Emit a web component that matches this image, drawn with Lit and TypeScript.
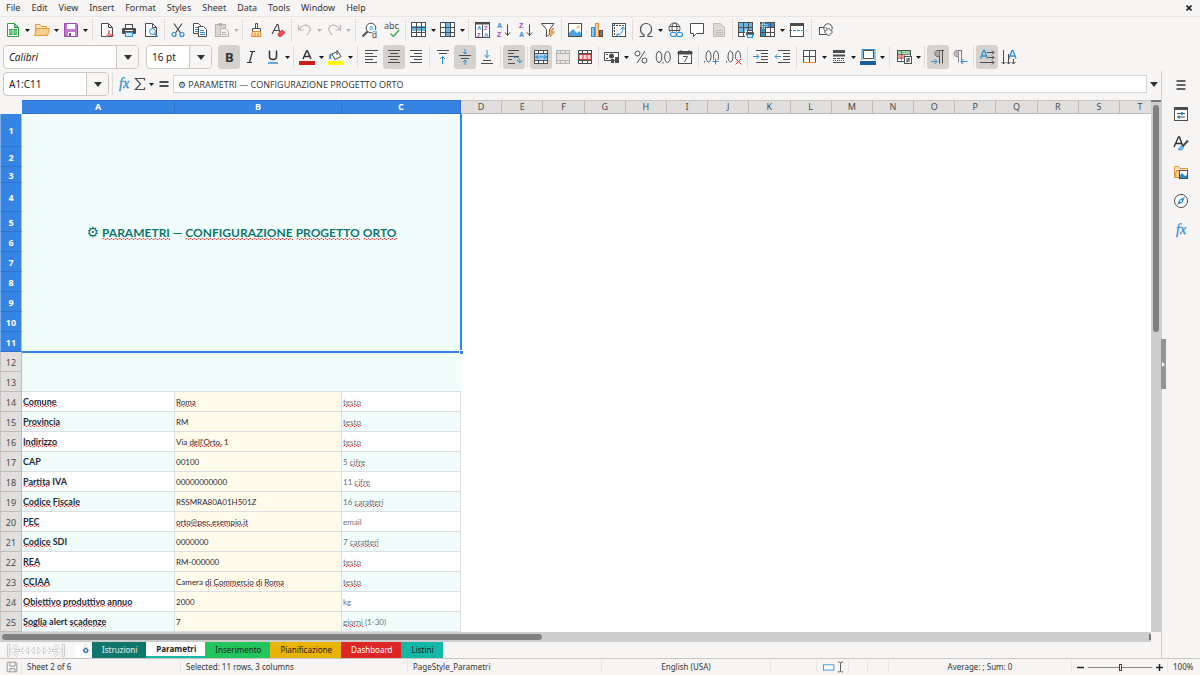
import { LitElement, html, svg, css, nothing } from "lit";
import { customElement, property, state } from "lit/decorators.js";
import { classMap } from "lit/directives/class-map.js";

const G = "#4d4d4f";
const B = "#2f8fd0";

/* Lines of an alignment glyph: each entry is [x1, x2, y]. */
const lines = (list: number[][]) =>
  list.map(([a, b, y]) => svg`<path d="M${a} ${y}H${b}" stroke=${G}/>`);

const cells = (fill: string, band: string) => svg`
  <rect x=".5" y=".5" width="14" height="14" fill="#fff" stroke=${G}/>
  <path d=${band} fill=${fill} stroke="none"/>
  <path d="M.5 5.5h14M.5 10.5h14M5.5 .5v14M10.5 .5v14" stroke=${G}/>`;

const icons: Record<string, unknown> = {
  new: svg`<path d="M2.5 1.5h7l4 4v9h-11z" fill="#fff" stroke="#2f9e47"/><path d="M9.5 1.5v4h4z" fill="#7fd091" stroke="#2f9e47"/><rect x="4" y="7" width="8" height="6" fill="#37a84e"/><path d="M4 9h8M4 11h8M8 7v6" stroke="#d9f3de" stroke-width=".7"/>`,
  open: svg`<path d="M1.5 13.500V2.500h4.500l1.500 2h5v2" fill="#fbe3bd" stroke="#e19a3c"/><path d="M.5 13.500l2-7h13l-2 7z" fill="#f9cf8d" stroke="#e19a3c"/>`,
  save: svg`<path d="M1.500 1.500h12l1 1v12h-13z" fill="#c47ad0" stroke="#9a48ad"/><rect x="4" y="2" width="8" height="5" fill="#fff"/><rect x="5" y="10" width="7" height="4" fill="#fff"/><rect x="6" y="11" width="2" height="3" fill="#9a48ad"/>`,
  pdf: svg`<path d="M2.500 1.500h7l4 4v9h-11z" fill="#fff" stroke=${G}/><path d="M9.500 1.500v4h4" stroke=${G}/><path d="M6 15c2.500-1 4.500-4 4-6.500-1 2.500 2 5 5 5-3-.8-6 0-9 1.500z" fill="#fbdcdc" stroke="#e2535a"/>`,
  print: svg`<rect x="4.500" y="2.500" width="7" height="4" fill="#fff" stroke=${G}/><rect x="1" y="6" width="14" height="6" rx="1" fill=${G}/><path d="M4 8.500h8" stroke="#fff"/><rect x="4.500" y="10.500" width="7" height="4" fill="#d8ecfb" stroke=${B}/>`,
  preview: svg`<path d="M2.500 1.500h7l4 4v9h-11z" fill="#fff" stroke=${G}/><path d="M9.500 1.500v4h4" stroke=${G}/><circle cx="9.500" cy="9.500" r="3" fill="#e4f3fd" stroke=${B}/><path d="M11.700 11.700l3 3" stroke=${B} stroke-width="1.500"/>`,
  cut: svg`<path d="M4 1.500l6.500 9.500M12 1.500L5.500 11" stroke=${G} stroke-width="1.200"/><circle cx="4" cy="12.500" r="2" stroke=${B} stroke-width="1.200"/><circle cx="12" cy="12.500" r="2" stroke=${B} stroke-width="1.200"/>`,
  copy: svg`<path d="M1.500 1.500h5l3 3v7h-8z" fill="#fff" stroke=${G}/><path d="M3 5.500h3M3 7.500h3M3 9.500h3" stroke=${B}/><path d="M6.500 4.500h5l3 3v7h-8z" fill="#fff" stroke=${G}/><path d="M8 8.500h4M8 10.500h5M8 12.500h5" stroke=${B}/>`,
  paste: svg`<rect x="1.500" y="2.500" width="10" height="12" fill="#d8d7d6" stroke="#b4b3b2"/><rect x="4.500" y="1" width="4" height="3" fill="#b4b3b2"/><path d="M6.500 6.500h5l3 3v5h-8z" fill="#f3f2f1" stroke="#b4b3b2"/><path d="M8 10.500h4M8 12.500h5" stroke="#b4b3b2"/>`,
  brush: svg`<path d="M7.500 1.500h2v5h-2z" fill="#fff" stroke=${G}/><path d="M4.500 6.500h8v3h-8z" fill="#fff" stroke=${G}/><path d="M4.500 9.500h8l.5 5H3.500z" fill="#fbd7a4" stroke="#e08a2e"/><path d="M7 11v3M10 11v3" stroke="#e08a2e"/>`,
  clear: svg`<path d="M2 12L7 2.500h1l2 9.500M4 8.500h5" stroke=${G} stroke-width="1.200"/><path d="M8 12l4-4 3 2.500-4 4H9z" fill="#ee4b52" stroke="#d9363e"/>`,
  undo: svg`<path d="M1.500 3v5h5M2 7.500C5 3 9 2.500 11.500 4c3 2 2 5-1.500 9" stroke="#b9b8b7" stroke-width="1.200"/>`,
  redo: svg`<path d="M14.500 3v5h-5M14 7.500C11 3 7 2.500 4.500 4c-3 2-2 5 1.500 9" stroke="#b9b8b7" stroke-width="1.200"/>`,
  find: svg`<circle cx="9" cy="6" r="4.800" stroke=${G} fill="#fff"/><path d="M5.500 9.500l-5 5" stroke=${G} stroke-width="2"/><g font-family="Liberation Sans, sans-serif"><text x="7" y="8" font-size="7" fill=${B}>a</text><text x="10" y="16" font-size="9" fill=${G} stroke="#f6f5f4" stroke-width="2" paint-order="stroke">d</text></g>`,
  spell: svg`<text x="0" y="7" font-size="9" fill=${G}>abc</text><path d="M6.500 11.500l3 3 5.500-6.500" stroke="#37a84e" stroke-width="1.400"/>`,
  row: cells("#67b7ea", "M1 4h13v5H1z"),
  col: cells("#67b7ea", "M5 1h5v13H5z"),
  sort: svg`<rect x="1.500" y=".5" width="14" height="15" fill="#fff" stroke=${G}/><path d="M1 .5h15v2H1z" fill=${G}/><path d="M8.500 3v12" stroke=${G}/><g font-size="6" font-weight="700" font-family="Liberation Sans, sans-serif"><text x="3" y="8" fill=${B}>A</text><text x="3" y="15" fill="#a347ba">Z</text><text x="10" y="8" fill="#a347ba">Z</text><text x="10" y="15" fill=${B}>A</text></g>`,
  az: svg`<g font-size="7" font-weight="700" font-family="Liberation Sans, sans-serif"><text x="1" y="6" fill=${B}>A</text><text x="1" y="15" fill="#a347ba">Z</text></g><path d="M11.500 2.500v11M9 10.500l2.500 3 2.500-3" stroke=${G}/>`,
  za: svg`<g font-size="7" font-weight="700" font-family="Liberation Sans, sans-serif"><text x="1" y="6" fill="#a347ba">Z</text><text x="1" y="15" fill=${B}>A</text></g><path d="M11.500 2.500v11M9 10.500l2.500 3 2.500-3" stroke=${G}/>`,
  filter: svg`<path d="M1.500 1.500h12.500l-4.500 6v5l-3 2v-7z" fill="#fff" stroke=${G}/><path d="M12 6.500l-3 4.500h2.500L10 15l4.500-5H12l1.500-3.500z" fill="#f7b35c" stroke="#e08a2e" stroke-width=".8"/>`,
  image: svg`<rect x="1.500" y="1.500" width="13" height="13" fill="#fff" stroke=${G}/><path d="M2 14v-3l4-4 4 4 2-2 2 2v3z" fill="#4ba3dd"/><circle cx="11" cy="5" r="1.500" fill="#f7b35c"/>`,
  chart: svg`<rect x="2.500" y="5.500" width="3" height="9" fill="#8cc8ef" stroke=${B}/><rect x="6.500" y="1.500" width="3" height="13" fill="#fbcf96" stroke="#e08a2e"/><rect x="10.500" y="8.500" width="3" height="6" fill="#777" stroke=${G}/>`,
  pivot: svg`<rect x="1.500" y="1.500" width="13" height="13" fill="#fff" stroke=${G}/><path d="M2 3.500h12M3.500 2v12" stroke=${G} stroke-dasharray="2 1"/><path d="M5.500 13C10 13 12 10 12 5.500M9.500 7.500L12 5l2 2.500M7.500 11l-2 2 2 1.500" stroke=${B}/>`,
  omega: svg`<path d="M1.500 14.500H6v-1.800C3.500 11.500 2.500 9.500 2.500 7.200 2.500 4 4.800 1.500 8 1.500s5.500 2.500 5.500 5.700c0 2.300-1 4.300-3.500 5.500v1.800h4.500" stroke=${G} stroke-width="1.200"/>`,
  link: svg`<circle cx="7.500" cy="6.500" r="5.500" fill="#fff" stroke=${G}/><ellipse cx="7.500" cy="6.500" rx="2.500" ry="5.500" stroke=${G}/><path d="M2.500 4.500h10M2 8.500h11" stroke=${G}/><rect x="3" y="9.500" width="13" height="6" fill="#f6f5f4"/><rect x="3.500" y="10.500" width="6" height="4" rx="2" stroke=${B} stroke-width="1.200"/><rect x="9.500" y="10.500" width="6" height="4" rx="2" stroke=${B} stroke-width="1.200"/>`,
  comment: svg`<path d="M1.500 1.500h13v10H7.500l-3 3v-3h-3z" fill="#fff" stroke=${G}/>`,
  note: svg`<path d="M2.500 1.500h7l4 4v9h-11z" fill="#dcdbda" stroke="#bdbcbb"/><path d="M4.500 8.500h7M4.500 10.500h7M4.500 12.500h7" stroke="#bdbcbb"/>`,
  area: svg`${cells("#67b7ea", "M1 1h13v9H1z")}<rect x="7" y="8" width="9" height="8" fill="#f6f5f4"/><rect x="8" y="10" width="8" height="3.500" rx="1" fill=${G}/><rect x="9.500" y="8.500" width="5" height="2" fill="#fff" stroke=${G}/><rect x="9.500" y="12.500" width="5" height="3" fill="#d8ecfb" stroke=${B}/>`,
  freeze: svg`${cells("#2f8fd0", "M1 1h4v13H1zM5 1h9v4H5z")}<path d="M3.500 0v7M.5 3.500h7" stroke="#fff" stroke-width="2"/><path d="M3.500 0v7M.5 3.500h7" stroke=${B}/>`,
  split: svg`<rect x="1.500" y="1.500" width="13" height="13" fill="#fff" stroke=${G}/><path d="M1 1h14v3H1z" fill=${G}/><path d="M0 8.500h16" stroke=${B} stroke-dasharray="3 1"/>`,
  shapes: svg`<rect x="1.500" y="5.500" width="7" height="7" fill="#fff" stroke=${G}/><circle cx="10" cy="6" r="4.200" fill="#fff" fill-opacity=".5" stroke=${G}/><path d="M10.500 6l4 4-4 4-4-4z" fill="#fff" stroke=${G}/>`,
  bold: svg`<text x="4" y="13" font-size="13" font-weight="700" fill="#333">B</text>`,
  italic: svg`<path d="M7 2.500h5M4 13.500h5M9.500 2.500l-3 11" stroke="#333" stroke-width="1.200"/>`,
  under: svg`<path d="M4.500 1.500v6c0 4 7 4 7 0v-6" stroke="#333" stroke-width="1.500"/><path d="M3 14h10" stroke=${B} stroke-width="1.500"/>`,
  color: svg`<path d="M4 10L7.500 2h1L12 10M5.500 7.500h5" stroke="#333" stroke-width="1.500"/><path d="M0 14h16" stroke="#c9211e" stroke-width="4"/>`,
  high: svg`<path d="M4 5l6-2.500 3 5-6 3z" fill="#fff" stroke=${G}/><path d="M9 1v5" stroke=${G}/><path d="M4 5c-2 .5-2.500 2.500-1.500 5" stroke=${B} stroke-width="1.800"/><path d="M0 14h16" stroke="#ffff00" stroke-width="4"/>`,
  left: svg`${lines([[1, 14, 1.5], [1, 9, 4.5], [1, 13, 7.5], [1, 9, 10.5], [1, 13, 13.5]])}`,
  center: svg`${lines([[2, 14, 1.5], [4, 12, 4.5], [2, 14, 7.5], [4, 12, 10.5], [2, 14, 13.5]])}`,
  right: svg`${lines([[2, 14, 1.5], [6, 14, 4.5], [2, 14, 7.5], [6, 14, 10.5], [2, 14, 13.5]])}`,
  top: svg`${lines([[2, 14, 1.5], [4, 12, 4.5]])}<path d="M7.500 15V7.500M5 10l2.500-2.500L10 10" stroke=${B}/>`,
  mid: svg`${lines([[2, 14, 6.5], [4, 12, 9.5]])}<path d="M8 0v4.500M6 3l2 2 2-2M8 16v-4.500M6 13l2-2 2 2" stroke=${B}/>`,
  bottom: svg`${lines([[2, 14, 14.5], [4, 12, 11.5]])}<path d="M8 1v7.500M5.500 6L8 8.500 10.500 6" stroke=${B}/>`,
  wrap: svg`${lines([[2, 13, 1.5], [2, 8, 4.5], [2, 13, 7.5], [2, 6, 10.5], [2, 9, 14.5]])}<path d="M8 8.500c4-1 6 1 6 5M11 11l3 3 2-3" stroke=${B}/>`,
  merge: svg`<rect x="1.500" y="1.500" width="13" height="13" fill="#fff" stroke=${G}/><path d="M1.500 4.500h13M1.500 11.500h13M5.500 1.500v3M10.500 1.500v3M5.500 11.500v3M10.500 11.500v3" stroke=${G}/><rect x="2" y="5" width="12" height="6" fill="#9fd2f4"/><path d="M2 8h12M5 6L3 8l2 2M11 6l2 2-2 2" stroke=${B}/>`,
  mergeOff: svg`<rect x="1.500" y="1.500" width="13" height="13" fill="#e6e5e4" stroke="#b4b3b2"/><path d="M1.500 4.500h13M1.500 11.500h13M5.500 1.500v3M10.500 1.500v3M5.500 11.500v3M10.500 11.500v3" stroke="#b4b3b2"/>`,
  unmerge: svg`<rect x="1.500" y="1.500" width="13" height="13" fill="#fff" stroke=${G}/><path d="M1.500 4.500h13M5.500 1.500v3M10.500 1.500v3M1.500 11.500h13M5.500 11.500v3M10.500 11.500v3" stroke=${G}/><path d="M2 5.500h12v5H2zM6 5.500v5M10 5.500v5" fill="#fbdcdc" stroke="#d9363e"/>`,
  money: svg`<rect x=".5" y="3.500" width="14" height="8" fill="#fff" stroke=${G}/><circle cx="7.500" cy="7" r="2.500" fill=${G}/><path d="M2 5.500h2M2 9.500h2" stroke=${G}/><rect x="7" y="10" width="3" height="4" fill=${G}/><rect x="11" y="8" width="4" height="6" fill=${G}/>`,
  percent: svg`<circle cx="4.500" cy="4.500" r="2.500" stroke=${G}/><circle cx="11.500" cy="11.500" r="2.500" stroke=${G}/><path d="M12 2L4 14" stroke=${G}/>`,
  number: svg`<ellipse cx="4" cy="8" rx="2.800" ry="5.500" stroke=${G}/><ellipse cx="12.500" cy="8" rx="2.800" ry="5.500" stroke=${G}/><path d="M8 13v1.500" stroke=${G}/>`,
  date: svg`<rect x="1.500" y="2.500" width="13" height="12" fill="#fff" stroke=${G}/><path d="M1 3h14v2H1zM4 1v2M12 1v2" fill=${G} stroke=${G}/><path d="M6 7.500h4.500L7.500 13" stroke=${G}/>`,
  decAdd: svg`<path d="M.5 12v1.500" stroke=${G}/><ellipse cx="4.500" cy="7.500" rx="2.500" ry="5.500" stroke=${G}/><ellipse cx="12" cy="7.500" rx="2.500" ry="5.500" stroke=${G}/><path d="M11.500 9.500v6M8.500 12.500h6" stroke="#f6f5f4" stroke-width="3"/><path d="M11.500 9.500v6M8.500 12.500h6" stroke=${B}/>`,
  decDel: svg`<path d="M.5 12v1.500" stroke=${G}/><ellipse cx="4.500" cy="7.500" rx="2.500" ry="5.500" stroke=${G}/><ellipse cx="12" cy="7.500" rx="2.500" ry="5.500" stroke=${G}/><path d="M9.500 9.500l6 6M15.500 9.500l-6 6" stroke="#f6f5f4" stroke-width="3"/><path d="M9.500 9.500l6 6M15.500 9.500l-6 6" stroke="#e2383f"/>`,
  indent: svg`${lines([[3, 15, 1.5], [8, 15, 4.5], [8, 15, 7.5], [8, 15, 10.5], [3, 15, 13.5]])}<path d="M0 7.500h6M3.500 5L6 7.500 3.500 10" stroke=${B}/>`,
  outdent: svg`${lines([[3, 15, 1.5], [8, 15, 4.5], [8, 15, 7.5], [8, 15, 10.5], [3, 15, 13.5]])}<path d="M0 7.500h6M2.500 5L0 7.500 2.500 10" stroke=${B}/>`,
  border: svg`<rect x="1.500" y="1.500" width="12" height="12" fill="#fff" stroke=${G}/><path d="M7.500 1.500v12M1.500 7.500h12" stroke=${G}/><path d="M1 13.500h13" stroke="#e08a2e"/>`,
  line: svg`<path d="M2 2.500h12" stroke=${G} stroke-width="3"/><path d="M2 6.500h12" stroke=${G} stroke-width="2"/><path d="M2 9.500h12" stroke=${G} stroke-dasharray="3 1"/><path d="M2 13.500h12" stroke=${G}/><path d="M2 11.500h12" stroke=${G} stroke-dasharray="1 1"/>`,
  lcolor: svg`<path d="M3.500 1.500h10v8h-10z" fill="#fff" stroke=${G}/><path d="M2 11V.5h13V11" stroke=${B}/><path d="M0 14h16" stroke="#1f5c9e" stroke-width="4"/>`,
  cond: svg`<rect x="1.500" y="1.500" width="13" height="11" fill="#fff" stroke=${G}/><rect x="2" y="2" width="12" height="3" fill="#8fd49d"/><rect x="2" y="5" width="7" height="4" fill="#f29a9a"/><path d="M5.500 2v10M1.500 5.500h13M1.500 9.500h8" stroke=${G} stroke-width=".6"/><rect x="8.500" y="7.500" width="7" height="7" fill="#fff" stroke=${G}/><path d="M10 10h4M10 12h4M13 9l-2 4.500" stroke=${G}/>`,
  ltr: svg`<path d="M14 1.500H8c-4 0-4 6 0 6h1M9.500 1.500v13M12.500 1.500v13" stroke=${G}/><path d="M5.500 4.500c0-2 2-3 4-3v6c-2 0-4-1-4-3z" fill="#a9a7a5"/><path d="M1 12.500h6M4.500 10L7 12.500 4.500 15" stroke=${B}/>`,
  rtl: svg`<path d="M10 1.500H5c-4 0-4 6 0 6h1M6.500 1.500v12M9.500 1.500v13" stroke=${G} stroke-opacity=".7"/><path d="M2.500 4.500c0-2 2-3 4-3v6c-2 0-4-1-4-3z" fill="#b9b7b5"/><path d="M9 12.500h6.500M11.500 10L9 12.500 11.500 15" stroke=${B}/>`,
  horiz: svg`<path d="M1.500 9.500L4.500 1.500h1l3 8M2.500 7h5" stroke=${B} stroke-width="1.300"/><path d="M8 3.500h7M13 1.500l2 2-2 2M9 8.500h6M13 6.500l2 2-2 2M1 13.500h14M13 11.500l2 2-2 2" stroke=${G}/>`,
  vert: svg`<path d="M8 9.500L11 1.500h1l3 8M9 7h5" stroke=${B} stroke-width="1.300"/><path d="M2.500 1v14M.5 13l2 2 2-2M7.500 5v10M5.500 13l2 2 2-2M12.500 10v5M10.500 13l2 2 2-2" stroke=${G}/>`,
  fx: svg`<text x="3" y="12" font-size="14" font-style="italic" font-family="Liberation Serif, serif" fill=${B} stroke=${B} stroke-width=".3">fx</text>`,
  sum: svg`<path d="M12.500 4.500v-2h-9L8.500 8l-5 5.500h9v-2" stroke=${G} stroke-width="1.200"/>`,
  equal: svg`<path d="M3.500 6h9M3.500 10h9" stroke=${G} stroke-width="2"/>`,
  menu: svg`<path d="M3.500 4h9M3.500 8h9M3.500 12h9" stroke="#333" stroke-width="1.400"/>`,
  props: svg`<rect x="1.500" y="1.500" width="13" height="13" fill="#fff" stroke=${G}/><path d="M1 1h14v3H1z" fill=${G}/><path d="M4 7.500h8M4 11h8" stroke=${G}/><path d="M9 6v3M6 9.500v3" stroke=${B} stroke-width="2"/>`,
  styles: svg`<path d="M1 12L5.500 2h1L10 12M3 8.500h6" stroke="#333" stroke-width="1.400"/><path d="M15 5.500l-5.500 6" stroke=${G} stroke-width="2"/><path d="M5 14.500c2-.5 1.500-3 3.500-3.500 2 0 2.500 3-.5 4z" fill="#8cc8ef" stroke=${B}/>`,
  gallery: svg`<path d="M1.500 13.500v-11h4l1.500 2h7.500v2" fill="#fbe3bd" stroke="#e19a3c"/><path d="M1.500 13.500l2-7h3v7z" fill="#f9cf8d" stroke="#e08a2e"/><rect x="6.500" y="6.500" width="8" height="8" fill="#fff" stroke=${G}/><path d="M7 14v-3l2-2 3 3 2-1v3z" fill=${B}/>`,
  nav: svg`<circle cx="8" cy="8" r="6.500" fill="#fff" stroke=${G}/><path d="M12 4l-2.500 5.500L4 12l2.500-5.500z" fill=${B}/><circle cx="8" cy="8" r="1" fill="#fff"/>`,
  disk: svg`<path d="M2.500 2.500h10l1 1v10h-11z" stroke="#8b8a89"/><path d="M5.500 3v4h6V3M5.500 13v-3h6v3" stroke="#8b8a89"/>`,
  selmode: svg`<rect x=".5" y="5.500" width="12" height="6" fill="#fff" stroke=${B}/>`,
  ibeam: svg`<path d="M5 2.500h2l1 .5 1-.5h2M5 13.500h2l1-.5 1 .5h2M8 3v10" stroke=${G}/>`,
  first: svg`<g stroke="#c9c8c7" fill="#fff"><path d="M1.500 1.500h2v13h-2zM11 1.500l1.500 1.500-4 4h6v2h-6l4 4-1.500 1.500L4.500 8z"/></g>`,
  prev: svg`<g stroke="#c9c8c7" fill="#fff"><path d="M2.500 4.500L.5 8l2 3.500M8 4.500L5 8l3 3.500zM14 4.500L11 8l3 3.500z"/></g>`,
  next: svg`<g stroke="#c9c8c7" fill="#fff"><path d="M13.500 4.500l2 3.500-2 3.500M8 4.500L11 8l-3 3.500zM2 4.500L5 8l-3 3.500z"/></g>`,
  last: svg`<g stroke="#c9c8c7" fill="#fff"><path d="M12.500 1.500h2v13h-2zM5 1.500L3.500 3l4 4h-6v2h6l-4 4L5 14.500 11.500 8z"/></g>`,
  add: svg`<path d="M0 1h10l4 4v11H0z" fill="#fff"/><path d="M10 1v4h4" stroke="#dddbd9"/><circle cx="11.500" cy="8" r="2" stroke="#3465a4" stroke-width="1.400"/><path d="M11.500 5v1.500M11.500 9.500V11M8.500 8H10M13 8h1.500" stroke="#3465a4"/>`,
};

@customElement("tool-button")
class ToolButton extends LitElement {
  @property() icon = "";
  @property() label = "";
  @property({ type: Boolean }) menu = false;
  @property({ type: Boolean }) narrow = false;
  @property({ type: Boolean }) pressed = false;
  @property({ type: Boolean }) muted = false;

  static styles = css`
    :host { display: flex; align-items: center; flex: none; }
    button { border: 0; background: none; padding: 0; margin: 0; display: grid; place-items: center; }
    .main { width: 22px; height: 24px; border-radius: 3px; }
    .main.narrow { width: 16px; }
    .main.on { background: #d5d1cd; }
    .drop { width: 7px; height: 24px; color: #1c1c1c; overflow: visible; }
    .drop.off { color: #b4b3b2; }
    svg { width: 16px; height: 16px; fill: none; overflow: visible; font-family: "Noto Sans", sans-serif; }
    .caret { width: 5px; height: 3px; fill: currentColor; }
  `;

  render() {
    return html`
      <button class=${classMap({ main: true, on: this.pressed, narrow: this.narrow })} aria-label=${this.label}
        ?disabled=${this.muted}>
        <svg viewBox="0 0 16 16">${icons[this.icon]}</svg>
      </button>
      ${this.menu
        ? html`<button class=${classMap({ drop: true, off: this.muted })} aria-label="${this.label} options">
            <svg class="caret" viewBox="0 0 5 3"><path d="M0 0h5L2.500 3z" /></svg>
          </button>`
        : nothing}
    `;
  }
}

/* Toolbar entries: "|" is a narrow divider, "||" a wide one.
   Suffixes: "v" has a menu, "+" is pressed, "-" is unavailable. */
const standardBar = "new:v open:v save:v || pdf print preview | cut copy paste:v- | brush clear | undo:v- redo:v- || find spell | row:v col:v | sort az za filter | image chart pivot | omega:v link comment note:- | area freeze:v split || shapes";
const formatBar = "bold:+ italic under:v | color:v high:v || left center:+ right | top mid:+ bottom | wrap:+ | merge:+ mergeOff:- unmerge | money:v percent number date | decAdd decDel | indent outdent | border:v line:v lcolor:v || cond:v | ltr:+ rtl | horiz:+ vert";

const menus = ["File", "Edit", "View", "Insert", "Format", "Styles", "Sheet", "Data", "Tools", "Window", "Help"];
const tabs = [
  ["Istruzioni", "teal"], ["Parametri", "current"], ["Inserimento", "green"],
  ["Pianificazione", "amber"], ["Dashboard", "red"], ["Listini", "aqua"],
];
const title = "PARAMETRI — CONFIGURAZIONE PROGETTO ORTO";
const titleParts = "~PARAMETRI — ~CONFIGURAZIONE ~PROGETTO ~ORTO";

/* Words that start with "~" are unknown to the spelling checker. */
const rows: string[][] = [
  ["~Comune", "~Roma", "~testo"],
  ["~Provincia", "RM", "~testo"],
  ["~Indirizzo", "Via ~dell'Orto, 1", "~testo"],
  ["CAP", "00100", "5 ~cifre"],
  ["~Partita IVA", "00000000000", "11 ~cifre"],
  ["~Codice ~Fiscale", "RSSMRA80A01H501Z", "16 ~caratteri"],
  ["~PEC", "~orto@pec.esempio.it", "email"],
  ["~Codice SDI", "0000000", "7 ~caratteri"],
  ["~REA", "RM-000000", "~testo"],
  ["~CCIAA", "Camera ~di ~Commercio ~di ~Roma", "~testo"],
  ["~Obiettivo ~produttivo ~annuo", "2000", "kg"],
  ["~Soglia alert ~scadenze", "7", "~giorni (1-30)"],
];

const checked = (text: string) =>
  text.split(" ").map((w, i) => html`${i ? " " : ""}${w[0] === "~" ? html`<span class="typo">${w.slice(1)}</span>` : w}`);

@customElement("app-root")
class AppRoot extends LitElement {
  @state() sheet = "Parametri";

  static styles = css`
    * { box-sizing: border-box; }
    :host {
      display: flex; flex-direction: column; height: 100vh; overflow: hidden;
      background: #f6f5f4; color: #333; font: 9px/12px "Noto Sans", sans-serif;
    }
    button, input, select { font: inherit; color: inherit; border: 0; padding: 0; margin: 0; background: none; outline: 0; border-radius: 0; }
    .menubar { display: flex; align-items: center; height: 17px; padding: 0 6px; gap: 11px; border-bottom: 1px solid #e8e6e4; }
    .close { margin-left: auto; width: 10px; height: 10px; display: grid; place-items: center; }
    .close svg { width: 6px; height: 6px; }
    .bar { display: flex; align-items: center; height: 27px; padding: 0 0 1px 2px; }
    .bar.format { padding-left: 3px; }
    .sep { width: 5px; height: 22px; flex: none; display: grid; justify-content: center; }
    .sep.wide { width: 7px; }
    .sep::after { content: ""; width: 1px; background: #dfdcd9; }
    .combo { position: relative; display: flex; height: 24px; border: 1px solid #cdc7c2; border-radius: 4px; background: #fff; overflow: hidden; flex: none; }
    .combo select, .combo input { appearance: none; flex: 1; min-width: 0; padding-left: 5px; font-size: 10px; color: #1c1c1c; }
    .combo .arrow { width: 22px; display: grid; place-items: center; border-left: 1px solid #cdc7c2; background: #f6f5f4; flex: none; pointer-events: none; }
    .arrow svg, .expand svg { width: 8px; height: 5px; fill: #2e3436; }
    .font { width: 136px; margin-right: 7px; }
    .font select { font-style: italic; }
    .size { width: 66px; margin-right: 6px; }
    .name { width: 106px; }
    .main { flex: 1; min-height: 0; display: flex; }
    .work { flex: 1; min-width: 0; display: flex; flex-direction: column; border-right: 1px solid #cfccc9; }
    .formula { display: flex; align-items: center; height: 29px; padding: 0 1px 3px 3px; flex: none; }
    .formula .sep { width: 7px; }
    .formula .equals { margin: 0 1px; }
    .formula .text { flex: 1; min-width: 0; height: 18px; border: 1px solid #d5d2cf; background: #fff; padding-left: 4px; font-family: "Open Sans", sans-serif; }
    .expand { width: 13px; height: 18px; display: grid; place-items: center; }
    .view { flex: 1; min-height: 0; display: flex; }
    .grid { flex: 1; min-width: 0; overflow: hidden; background: #fff; }
    table { table-layout: fixed; width: 100%; border-collapse: separate; border-spacing: 0; }
    th, td { padding: 0; overflow: hidden; white-space: nowrap; }
    .c-head { width: 22px; } .c-a { width: 153px; } .c-b { width: 167px; } .c-c { width: 119px; } .c-last { width: 31px; }
    th { background: #e0dfde; font-weight: 400; color: #4a4a4a; border: solid #bdbbb9; border-width: 0 1px 1px 0; line-height: 12px; text-align: center; }
    thead th { height: 14px; border-top: 1px solid #c6c4c2; }
    thead th:last-child { border-right: 0; padding-left: 9px; }
    thead th.corner { background: #f6f5f4; border-color: #f6f5f4; }
    th.on { background: #3584e4; color: #fff; font-weight: 700; border-color: #2f74c8; }
    tbody th { border-left: 1px solid #c6c4c2; padding-top: 2px; }
    tbody th.on { border-right-color: #a9c4e6; border-left-color: #7fb0ec; }
    .r33 { height: 33px; } .r29 { height: 29px; } .r20 { height: 20px; } .r16 { height: 16px; }
    .banner { position: relative; overflow: visible; background: #f0fdfa; color: #0f766e; text-align: center; font: 700 12px/14px Lato, sans-serif; padding-bottom: 2px; }
    .gear { font: 400 14px/14px "DejaVu Sans", sans-serif; }
    .frame { position: absolute; inset: 0 -1px -1px 0; border: solid #3584e4; border-width: 0 2px 2px 0; pointer-events: none; }
    .frame::after { content: ""; position: absolute; right: -3px; bottom: -3px; width: 3px; height: 3px; background: #3584e4; border: solid #fff; border-width: 1px 0 0 1px; box-sizing: content-box; }
    .mint { background: #f0fdfa; }
    .data td { font: 8px/12px Lato, sans-serif; padding-left: 1px; border: solid #dcdfe2; border-width: 0 1px 1px 0; color: #1f2937; }
    .data.even td { background: #f0fdfa; }
    .data td.key { font-weight: 700; font-size: 9px; }
    .data td.value { background: #fffbeb; }
    .data td.hint { color: #6b7280; }
    .last-blank td.mint { border-bottom: 1px solid #dcdfe2; }
    .typo {
      background: url("data:image/svg+xml,%3Csvg xmlns='http://www.w3.org/2000/svg' width='4' height='2'%3E%3Cpath d='M0 1.500L1 .5H2L3 1.500H4' fill='none' stroke='%23e23b3b' stroke-width='1'/%3E%3C/svg%3E") repeat-x left bottom;
    }
    .vscroll { width: 10px; background: #cdcdcd; padding: 3px 2px 0; border-top: 2px solid #777; flex: none; }
    .vthumb { height: 43%; background: #808080; border-radius: 3px; }
    .hscroll { height: 10px; background: #cdcdcd; padding: 2px 0 2px 2px; margin-right: 10px; flex: none; display: flex; justify-content: space-between; }
    .hthumb { width: 47%; background: #808080; border-radius: 3px; }
    .hend { width: 2px; background: #777; }
    .tabs { display: flex; align-items: stretch; height: 17px; border-bottom: 1px solid #c9c6c3; flex: none; font-size: 8px; }
    .navs { display: flex; align-items: center; padding: 0 7px 0 6px; }
    .navs button { width: 15px; height: 16px; display: grid; place-items: center; }
    .navs svg, .add svg { width: 15px; height: 15px; fill: none; }
    .add { width: 18px; margin-right: 1px; display: grid; place-items: center; }
    .tab { padding: 0 9px 0 10px; height: 16px; color: #1c1c1c; }
    .tab.teal { background: #0f766e; color: #e6f4f2; }
    .tab.current { background: #fff; font-weight: 700; border-bottom: 2px solid #14b8a6; }
    .tab.green { background: #22c55e; }
    .tab.amber { background: #eab308; }
    .tab.red { background: #dc2626; color: #fff; }
    .tab.aqua { background: #14b8a6; }
    .sidebar { position: relative; width: 38px; flex: none; display: flex; flex-direction: column; align-items: center; padding-top: 2px; border-bottom: 1px solid #c9c6c3; gap: 5px; }
    .grip { position: absolute; left: -1px; top: 268px; width: 5px; height: 50px; background: #949494; display: grid; place-items: center; }
    .grip svg { width: 3px; height: 5px; fill: #fff; }
    .status {
      display: grid; height: 16px; align-items: center; flex: none; font-size: 8px;
      grid-template-columns: 21px 159fr 227fr 194fr 169fr 46fr 32px 19px 21px 183fr 96px 33px;
    }
    .status > * { border-left: 1px solid #e6e4e2; height: 12px; min-width: 0; padding-left: 5px; white-space: nowrap; display: flex; align-items: center; }
    .status > :first-child { border: 0; }
    .status svg { width: 14px; height: 14px; fill: none; flex: none; }
    .status .mid { justify-content: center; padding: 0; }
    .status .s-mode { padding-left: 6px; }
    .status .ibeam { width: 7px; }
    .status .s-zoom { gap: 4px; padding-right: 4px; }
    .s-zoom button { width: 7px; height: 12px; display: grid; place-items: center; }
    .s-zoom button svg { width: 7px; height: 7px; }
    .slider { appearance: none; flex: 1; min-width: 0; height: 12px; background: linear-gradient(#8b8a89, #8b8a89) center / 100% 1px no-repeat; }
    .slider::-webkit-slider-thumb { appearance: none; width: 3px; height: 7px; border: 1px solid #444; background: #f6f5f4; }
  `;

  bar(spec: string) {
    return spec.split(" ").map((entry) => {
      if (entry[0] === "|") return html`<span class=${classMap({ sep: true, wide: entry === "||" })}></span>`;
      const [name, flags = ""] = entry.split(":");
      return html`<tool-button .icon=${name} .label=${name} .menu=${flags.includes("v")}
        .pressed=${flags.includes("+")} .muted=${flags.includes("-")}></tool-button>`;
    });
  }

  arrow() {
    return html`<svg viewBox="0 0 8 5"><path d="M0 0h8L4 5z" /></svg>`;
  }

  blank(n: number) {
    const height = n === 1 ? "r33" : n === 3 ? "r16" : n === 4 ? "r29" : "r20";
    const selected = n <= 11;
    return html`<tr class=${classMap({ [height]: true, "last-blank": n === 13 })}>
      <th scope="row" class=${classMap({ on: selected })}>${n}</th>
      ${n === 1
        ? html`<td class="banner" colspan="3" rowspan="11">
            <span class="gear">⚙</span> ${checked(titleParts)}<div class="frame"></div>
          </td>`
        : selected ? nothing : html`<td class="mint" colspan="3"></td>`}
      ${n === 1 ? html`<td colspan="17" rowspan="25"></td>` : nothing}
    </tr>`;
  }

  render() {
    const letters = [..."ABCDEFGHIJKLMNOPQRST"];
    return html`
      <nav class="menubar">
        ${menus.map((m) => html`<button>${m}</button>`)}
        <button class="close" aria-label="Close"><svg viewBox="0 0 6 6"><path d="M.5 .5l5 5M5.500 .5l-5 5" stroke="#222" stroke-width="1.600" /></svg></button>
      </nav>
      <div class="bar">${this.bar(standardBar)}</div>
      <div class="bar format">
        <div class="combo font">
          <select aria-label="Font name"><option>Calibri</option></select>
          <span class="arrow">${this.arrow()}</span>
        </div>
        <div class="combo size">
          <select aria-label="Font size"><option>16 pt</option></select>
          <span class="arrow">${this.arrow()}</span>
        </div>
        ${this.bar(formatBar)}
      </div>
      <div class="main">
        <div class="work">
          <div class="formula">
            <div class="combo name">
              <input aria-label="Name box" value="A1:C11" />
              <button class="arrow" aria-label="Named ranges">${this.arrow()}</button>
            </div>
            <span class="sep"></span>
            <tool-button .icon=${"fx"} .label=${"Function wizard"} .narrow=${true}></tool-button>
            <tool-button .icon=${"sum"} .label=${"Select function"} .narrow=${true} .menu=${true}></tool-button>
            <tool-button class="equals" .icon=${"equal"} .label=${"Formula"} .narrow=${true}></tool-button>
            <input class="text" aria-label="Input line" .value=${"⚙ " + title} />
            <button class="expand" aria-label="Expand formula bar">${this.arrow()}</button>
          </div>
          <div class="view">
            <div class="grid">
              <table>
                <colgroup>
                  <col class="c-head" /><col class="c-a" /><col class="c-b" /><col class="c-c" />
                  ${letters.slice(3, 19).map(() => html`<col />`)}<col class="c-last" />
                </colgroup>
                <thead>
                  <tr>
                    <th class="corner"></th>
                    ${letters.map((l, i) => html`<th scope="col" class=${classMap({ on: i < 3 })}>${l}</th>`)}
                  </tr>
                </thead>
                <tbody>
                  ${Array.from({ length: 13 }, (_, i) => this.blank(i + 1))}
                  ${rows.map(([key, value, hint], i) => html`
                    <tr class=${classMap({ data: true, r20: true, even: i % 2 === 1 })}>
                      <th scope="row">${i + 14}</th>
                      <td class="key">${checked(key)}</td>
                      <td class="value">${checked(value)}</td>
                      <td class="hint">${checked(hint)}</td>
                    </tr>`)}
                </tbody>
              </table>
            </div>
            <div class="vscroll"><div class="vthumb"></div></div>
          </div>
          <div class="hscroll"><div class="hthumb"></div><div class="hend"></div></div>
          <div class="tabs">
            <div class="navs">
              ${["first", "prev", "next", "last"].map((n) => html`<button aria-label="${n} sheet"><svg viewBox="0 0 16 16">${icons[n]}</svg></button>`)}
            </div>
            <button class="add" aria-label="Add sheet"><svg viewBox="0 0 16 16">${icons.add}</svg></button>
            ${tabs.map(([name, tone]) => html`<button class="tab ${tone}" @click=${() => (this.sheet = name)}>${name}</button>`)}
          </div>
        </div>
        <aside class="sidebar">
          ${["menu", "props", "styles", "gallery", "nav", "fx"].map((n) => html`<tool-button .icon=${n} .label=${n}></tool-button>`)}
          <button class="grip" aria-label="Hide sidebar"><svg viewBox="0 0 3 5"><path d="M0 0l3 2.500L0 5z" /></svg></button>
        </aside>
      </div>
      <footer class="status">
        <span><svg viewBox="0 0 16 16">${icons.disk}</svg></span>
        <span>Sheet 2 of 6</span>
        <span>Selected: 11 rows, 3 columns</span>
        <span>PageStyle_Parametri</span>
        <span class="mid">English (USA)</span>
        <span></span>
        <span class="s-mode"><svg viewBox="0 0 16 16">${icons.selmode}</svg><svg class="ibeam" viewBox="4 0 8 16">${icons.ibeam}</svg></span>
        <span></span>
        <span></span>
        <span class="mid">Average: ; Sum: 0</span>
        <span class="s-zoom">
          <button aria-label="Zoom out"><svg viewBox="0 0 7 7"><path d="M0 3.500h7" stroke="#222" stroke-width="1.500" /></svg></button>
          <input class="slider" type="range" aria-label="Zoom" value="50" />
          <button aria-label="Zoom in"><svg viewBox="0 0 7 7"><path d="M0 3.500h7M3.500 0v7" stroke="#222" stroke-width="1.500" /></svg></button>
        </span>
        <span>100%</span>
      </footer>
    `;
  }
}
